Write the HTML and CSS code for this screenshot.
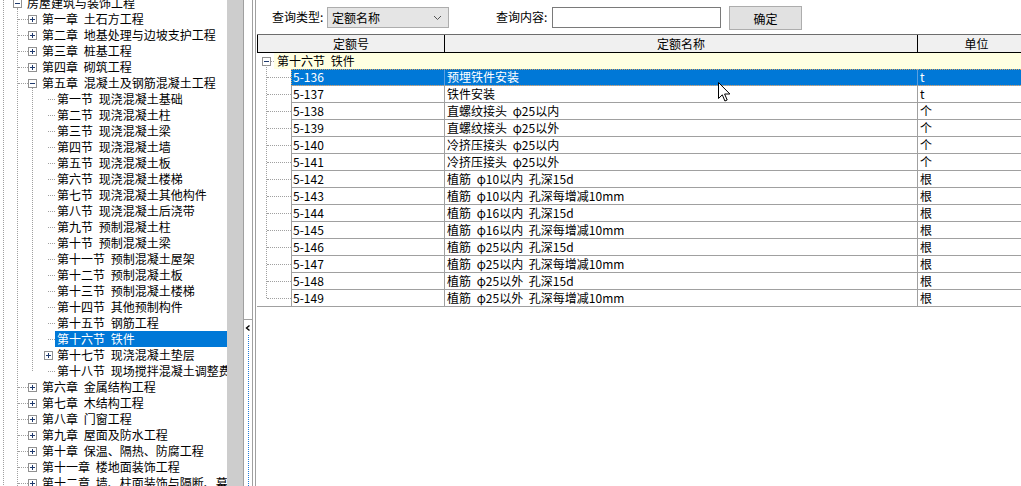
FILE: index.html
```html
<!DOCTYPE html>
<html lang="zh-CN">
<head>
<meta charset="utf-8">
<title>定额查询</title>
<link rel="stylesheet" href="styles.css">
</head>
<body>
<svg class="defs" width="0" height="0" aria-hidden="true">
  <symbol id="plus" viewBox="0 0 9 9"><rect x="0.5" y="0.5" width="8" height="8" fill="#fff" stroke="#919191"/><path d="M2 4.5h5M4.5 2v5" stroke="#1f3a6e"/></symbol>
  <symbol id="minus" viewBox="0 0 9 9"><rect x="0.5" y="0.5" width="8" height="8" fill="#fff" stroke="#919191"/><path d="M2 4.5h5" stroke="#1f3a6e"/></symbol>
</svg>
<div class="app">
  <div class="tree-pane">
    <div class="tree">
      <div class="node lv0"><svg class="box"><use href="#minus"/></svg><span class="lbl">房屋建筑与装饰工程</span></div>
      <div class="node lv1"><svg class="box"><use href="#plus"/></svg><span class="lbl">第一章 土石方工程</span></div>
      <div class="node lv1"><svg class="box"><use href="#plus"/></svg><span class="lbl">第二章 地基处理与边坡支护工程</span></div>
      <div class="node lv1"><svg class="box"><use href="#plus"/></svg><span class="lbl">第三章 桩基工程</span></div>
      <div class="node lv1"><svg class="box"><use href="#plus"/></svg><span class="lbl">第四章 砌筑工程</span></div>
      <div class="node lv1"><svg class="box"><use href="#minus"/></svg><span class="lbl">第五章 混凝土及钢筋混凝土工程</span></div>
      <div class="sections">
        <div class="node lv2 leaf"><span class="lbl">第一节 现浇混凝土基础</span></div>
        <div class="node lv2 leaf"><span class="lbl">第二节 现浇混凝土柱</span></div>
        <div class="node lv2 leaf"><span class="lbl">第三节 现浇混凝土梁</span></div>
        <div class="node lv2 leaf"><span class="lbl">第四节 现浇混凝土墙</span></div>
        <div class="node lv2 leaf"><span class="lbl">第五节 现浇混凝土板</span></div>
        <div class="node lv2 leaf"><span class="lbl">第六节 现浇混凝土楼梯</span></div>
        <div class="node lv2 leaf"><span class="lbl">第七节 现浇混凝土其他构件</span></div>
        <div class="node lv2 leaf"><span class="lbl">第八节 现浇混凝土后浇带</span></div>
        <div class="node lv2 leaf"><span class="lbl">第九节 预制混凝土柱</span></div>
        <div class="node lv2 leaf"><span class="lbl">第十节 预制混凝土梁</span></div>
        <div class="node lv2 leaf"><span class="lbl">第十一节 预制混凝土屋架</span></div>
        <div class="node lv2 leaf"><span class="lbl">第十二节 预制混凝土板</span></div>
        <div class="node lv2 leaf"><span class="lbl">第十三节 预制混凝土楼梯</span></div>
        <div class="node lv2 leaf"><span class="lbl">第十四节 其他预制构件</span></div>
        <div class="node lv2 leaf"><span class="lbl">第十五节 钢筋工程</span></div>
        <div class="node lv2 leaf selected"><span class="lbl">第十六节 铁件</span></div>
        <div class="node lv2 branch"><svg class="box"><use href="#plus"/></svg><span class="lbl">第十七节 现浇混凝土垫层</span></div>
        <div class="node lv2 leaf"><span class="lbl">第十八节 现场搅拌混凝土调整费</span></div>
      </div>
      <div class="node lv1"><svg class="box"><use href="#plus"/></svg><span class="lbl">第六章 金属结构工程</span></div>
      <div class="node lv1"><svg class="box"><use href="#plus"/></svg><span class="lbl">第七章 木结构工程</span></div>
      <div class="node lv1"><svg class="box"><use href="#plus"/></svg><span class="lbl">第八章 门窗工程</span></div>
      <div class="node lv1"><svg class="box"><use href="#plus"/></svg><span class="lbl">第九章 屋面及防水工程</span></div>
      <div class="node lv1"><svg class="box"><use href="#plus"/></svg><span class="lbl">第十章 保温、隔热、防腐工程</span></div>
      <div class="node lv1"><svg class="box"><use href="#plus"/></svg><span class="lbl">第十一章 楼地面装饰工程</span></div>
      <div class="node lv1"><svg class="box"><use href="#plus"/></svg><span class="lbl">第十二章 墙、柱面装饰与隔断、幕墙工程</span></div>
    </div>
  </div>
  <div class="vscroll"></div>
  <div class="splitter">
    <div class="split-col">
      <div class="split-top"></div>
      <div class="split-btn">
        <svg class="chev" width="8" height="8" viewBox="0 0 8 8"><path d="M5.5 1.5L2.5 4l3 2.5" fill="none" stroke="#000" stroke-width="1.4"/></svg>
        <div class="split-dots"></div>
      </div>
    </div>
  </div>
  <div class="main">
    <div class="toolbar">
      <span class="tlabel">查询类型:</span>
      <div class="select"><span>定额名称</span><svg width="9" height="6" viewBox="0 0 9 6"><path d="M1 1l3.5 3.5L8 1" fill="none" stroke="#555"/></svg></div>
      <span class="tlabel second">查询内容:</span>
      <div class="input"></div>
      <div class="button">确定</div>
    </div>
    <div class="grid">
      <div class="hdr">
        <div class="h h1">定额号</div>
        <div class="h h2">定额名称</div>
        <div class="h h3">单位</div>
      </div>
      <div class="grp">
        <svg class="gbox"><use href="#minus"/></svg>
        <span class="gstub"></span>
        <span class="glabel">第十六节 铁件</span>
      </div>
      <div class="rows">
        <div class="row sel"><span class="indent"><i></i></span><div class="cells"><span class="cell c1">5-136</span><span class="cell c2">预埋铁件安装</span><span class="cell c3">t</span></div></div>
        <div class="row"><span class="indent"><i></i></span><div class="cells"><span class="cell c1">5-137</span><span class="cell c2">铁件安装</span><span class="cell c3">t</span></div></div>
        <div class="row"><span class="indent"><i></i></span><div class="cells"><span class="cell c1">5-138</span><span class="cell c2">直螺纹接头 φ25以内</span><span class="cell c3">个</span></div></div>
        <div class="row"><span class="indent"><i></i></span><div class="cells"><span class="cell c1">5-139</span><span class="cell c2">直螺纹接头 φ25以外</span><span class="cell c3">个</span></div></div>
        <div class="row"><span class="indent"><i></i></span><div class="cells"><span class="cell c1">5-140</span><span class="cell c2">冷挤压接头 φ25以内</span><span class="cell c3">个</span></div></div>
        <div class="row"><span class="indent"><i></i></span><div class="cells"><span class="cell c1">5-141</span><span class="cell c2">冷挤压接头 φ25以外</span><span class="cell c3">个</span></div></div>
        <div class="row"><span class="indent"><i></i></span><div class="cells"><span class="cell c1">5-142</span><span class="cell c2">植筋 φ10以内 孔深15d</span><span class="cell c3">根</span></div></div>
        <div class="row"><span class="indent"><i></i></span><div class="cells"><span class="cell c1">5-143</span><span class="cell c2">植筋 φ10以内 孔深每增减10mm</span><span class="cell c3">根</span></div></div>
        <div class="row"><span class="indent"><i></i></span><div class="cells"><span class="cell c1">5-144</span><span class="cell c2">植筋 φ16以内 孔深15d</span><span class="cell c3">根</span></div></div>
        <div class="row"><span class="indent"><i></i></span><div class="cells"><span class="cell c1">5-145</span><span class="cell c2">植筋 φ16以内 孔深每增减10mm</span><span class="cell c3">根</span></div></div>
        <div class="row"><span class="indent"><i></i></span><div class="cells"><span class="cell c1">5-146</span><span class="cell c2">植筋 φ25以内 孔深15d</span><span class="cell c3">根</span></div></div>
        <div class="row"><span class="indent"><i></i></span><div class="cells"><span class="cell c1">5-147</span><span class="cell c2">植筋 φ25以内 孔深每增减10mm</span><span class="cell c3">根</span></div></div>
        <div class="row"><span class="indent"><i></i></span><div class="cells"><span class="cell c1">5-148</span><span class="cell c2">植筋 φ25以外 孔深15d</span><span class="cell c3">根</span></div></div>
        <div class="row"><span class="indent"><i></i></span><div class="cells"><span class="cell c1">5-149</span><span class="cell c2">植筋 φ25以外 孔深每增减10mm</span><span class="cell c3">根</span></div></div>
      </div>
    </div>
  </div>
</div>
<svg class="cursor" width="13" height="21" viewBox="0 0 13 21"><path d="M0.5 0.5v16l3.8-3.7 2.6 6.2 2.3-1-2.6-6h5.3z" fill="#fff" stroke="#000" stroke-linejoin="miter"/></svg>
</body>
</html>
```
FILE: styles.css
```css
html, body {
  margin: 0;
  padding: 0;
}
body {
  width: 1021px;
  height: 486px;
  overflow: hidden;
  position: relative;
  background: #fff;
  color: #000;
  font-family: "Noto Sans CJK SC", "Liberation Sans", sans-serif;
  font-size: 12px;
}
.defs { position: absolute; }

.app {
  display: flex;
  height: 486px;
}

/* ---------- left tree ---------- */
.tree-pane {
  width: 227px;
  flex: none;
  overflow: hidden;
  background: #fff;
}
.tree {
  position: relative;
  margin-top: -5px;
  width: 227px;
}
.tree::before {
  content: "";
  position: absolute;
  left: 3px;
  top: 0;
  height: 600px;
  border-left: 1px dotted #a0a0a0;
}
.tree::after {
  content: "";
  position: absolute;
  left: 17px;
  top: 13px;
  height: 600px;
  border-left: 1px dotted #a0a0a0;
}
.node {
  position: relative;
  display: flex;
  align-items: center;
  height: 16px;
  line-height: 16px;
  white-space: nowrap;
}
.node .box {
  width: 9px;
  height: 9px;
  flex: none;
  position: relative;
  z-index: 1;
}
.lbl {
  padding: 0 2px;
  white-space: pre;
}
.lv0 { padding-left: 13px; }
.lv0 .lbl { margin-left: 3px; }
.lv1 { padding-left: 28px; }
.lv1 .lbl { margin-left: 3px; word-spacing: 3px; }
.lv1::before {
  content: "";
  position: absolute;
  left: 18px;
  width: 10px;
  top: 8px;
  border-top: 1px dotted #a0a0a0;
}
.lv2 .lbl { word-spacing: 3px; }
.lv2.leaf { padding-left: 55px; }
.lv2.leaf::before {
  content: "";
  position: absolute;
  left: 48px;
  width: 7px;
  top: 8px;
  border-top: 1px dotted #a0a0a0;
}
.lv2.branch { padding-left: 44px; }
.lv2.branch .lbl { margin-left: 2px; }
.sections {
  position: relative;
}
.sections::before {
  content: "";
  position: absolute;
  left: 32px;
  top: -3px;
  bottom: 8px;
  border-left: 1px dotted #a0a0a0;
}
.selected .lbl {
  flex: 1;
  background: #0078d7;
  color: #fff;
}

/* ---------- scrollbar + splitter ---------- */
.vscroll {
  width: 16px;
  flex: none;
  background: #cdcdcd;
}
.splitter {
  width: 12px;
  flex: none;
  display: flex;
  flex-direction: column;
  background: #fff;
}
.split-col {
  width: 8px;
  flex: 1;
  display: flex;
  flex-direction: column;
  border-left: 1px solid #a0a0a0;
  border-right: 1px solid #a0a0a0;
}
.split-top {
  height: 319px;
  flex: none;
  border-bottom: 1px solid #a0a0a0;
}
.split-btn {
  flex: 1;
  display: flex;
  flex-direction: column;
  align-items: center;
}
.chev {
  margin-top: 4px;
  flex: none;
}
.split-dots {
  margin-top: 3px;
  flex: 1;
  border-left: 1px dotted #1e7ad8;
}

/* ---------- main ---------- */
.main {
  flex: 1;
  min-width: 0;
  overflow: hidden;
  border-left: 1px solid #a0a0a0;
}
.toolbar {
  height: 34px;
  display: flex;
  align-items: flex-start;
  padding-left: 16px;
}
.tlabel {
  width: 55px;
  flex: none;
  margin-top: 8px;
  line-height: 18px;
  white-space: nowrap;
}
.tlabel.second { margin-left: 47px; width: 56px; }
.select {
  width: 122px;
  height: 21px;
  margin-top: 7px;
  box-sizing: border-box;
  border: 1px solid #adadad;
  background: #e5e5e5;
  display: flex;
  align-items: center;
  justify-content: space-between;
  padding: 0 6px 0 4px;
  flex: none;
}
.input {
  width: 169px;
  height: 21px;
  margin-top: 7px;
  box-sizing: border-box;
  border: 1px solid #7a7a7a;
  background: #fff;
  flex: none;
}
.button {
  width: 73px;
  height: 24px;
  margin-top: 6px;
  margin-left: 8px;
  box-sizing: border-box;
  border: 1px solid #adadad;
  background: #e1e1e1;
  display: flex;
  align-items: center;
  justify-content: center;
  flex: none;
}

/* ---------- grid ---------- */
.grid {
  margin-left: 1px;
  width: 800px;
}
.hdr {
  display: flex;
  height: 19px;
  box-sizing: border-box;
  border-top: 1px solid #6d6d6d;
  border-bottom: 1px solid #000;
  background: #f0f0f0;
}
.h {
  box-sizing: border-box;
  text-align: center;
  line-height: 17px;
  border-right: 1px solid #000;
  flex: none;
}
.h1 { width: 188px; border-left: 1px solid #000; }
.h2 { width: 473px; }
.h3 { width: 118px; }

.grp {
  display: flex;
  align-items: center;
  height: 16px;
  padding-left: 5px;
}
.gbox { width: 9px; height: 9px; flex: none; }
.gstub {
  width: 3px;
  flex: none;
  border-top: 1px dotted #a0a0a0;
}
.glabel {
  flex: 1;
  align-self: stretch;
  background: #ffffe1;
  padding-left: 3px;
  line-height: 16px;
  word-spacing: 3px;
}

.rows {
  position: relative;
}
.rows::before {
  content: "";
  position: absolute;
  left: 9px;
  top: -4px;
  bottom: 9px;
  border-left: 1px dotted #a0a0a0;
}
.row {
  display: flex;
  height: 17px;
}
.indent {
  width: 34px;
  flex: none;
  box-sizing: border-box;
}
.indent i {
  display: block;
  margin-left: 10px;
  width: 24px;
  height: 8px;
  border-bottom: 1px dotted #a0a0a0;
}
.row:last-child .indent { border-bottom: 1px solid #a0a0a0; }
.cells {
  display: flex;
  position: relative;
}
.cell {
  box-sizing: border-box;
  height: 17px;
  line-height: 16px;
  padding-left: 1px;
  border-left: 1px solid #a0a0a0;
  border-bottom: 1px solid #a0a0a0;
  white-space: pre;
  word-spacing: 3px;
  flex: none;
}
.c1 { width: 153px; }
.c2 { width: 473px; padding-left: 2px; }
.c3 { width: 140px; padding-left: 2px; }

.sel .cells {
  background: #0078d7;
  color: #fff;
}
.sel .cell { border-color: #5a9fe0; }
.sel .c1 { border-left: 1px dotted #d4a36a; }
.sel .cells::after {
  content: "";
  position: absolute;
  left: 0;
  right: 0;
  top: 0;
  bottom: 0;
  border-top: 1px dotted #d4a36a;
  border-bottom: 1px dotted #d4a36a;
  pointer-events: none;
}

.cursor {
  position: absolute;
  left: 718px;
  top: 82px;
}
```
